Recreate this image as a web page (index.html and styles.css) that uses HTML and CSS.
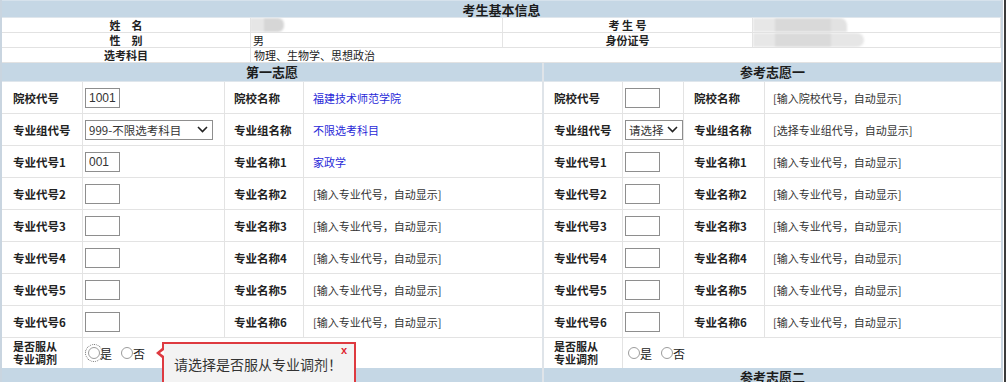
FILE: index.html
```html
<!DOCTYPE html>
<html lang="zh-CN">
<head>
<meta charset="utf-8">
<title>考生基本信息</title>
<link rel="stylesheet" href="styles.css">
</head>
<body>
<div class="window">
  <div class="page">
    <div class="band">考生基本信息</div>
    <div class="info">
      <div class="il">姓　名</div>
      <div class="iv"><span class="mosaic m-name"><i></i><i></i></span></div>
      <div class="il">考 生 号</div>
      <div class="iv"><span class="mosaic m-id1"><i></i><i></i><i></i></span></div>
      <div class="il">性　别</div>
      <div class="iv">男</div>
      <div class="il">身份证号</div>
      <div class="iv"><span class="mosaic m-id2"><i></i><i></i><i></i></span></div>
      <div class="il">选考科目</div>
      <div class="iv span3">物理、生物学、思想政治</div>
    </div>

    <div class="panels">
      <section class="panel p-left">
        <div class="band">第一志愿</div>

        <div class="c lab">院校代号</div>
        <div class="c inp"><input class="txt" type="text" value="1001"></div>
        <div class="c lab2">院校名称</div>
        <div class="c val blue">福建技术师范学院</div>

        <div class="c lab">专业组代号</div>
        <div class="c inp"><span class="sel sel-wide"><span class="sel-text">999-不限选考科目</span><svg class="chev" width="11" height="7" viewBox="0 0 11 7"><path d="M1 1 L5.5 5.5 L10 1" fill="none" stroke="#222" stroke-width="1.6"/></svg></span></div>
        <div class="c lab2">专业组名称</div>
        <div class="c val blue">不限选考科目</div>

        <div class="c lab">专业代号1</div>
        <div class="c inp"><input class="txt" type="text" value="001"></div>
        <div class="c lab2">专业名称1</div>
        <div class="c val blue">家政学</div>

        <div class="c lab">专业代号2</div>
        <div class="c inp"><input class="txt" type="text"></div>
        <div class="c lab2">专业名称2</div>
        <div class="c val">[输入专业代号，自动显示]</div>

        <div class="c lab">专业代号3</div>
        <div class="c inp"><input class="txt" type="text"></div>
        <div class="c lab2">专业名称3</div>
        <div class="c val">[输入专业代号，自动显示]</div>

        <div class="c lab">专业代号4</div>
        <div class="c inp"><input class="txt" type="text"></div>
        <div class="c lab2">专业名称4</div>
        <div class="c val">[输入专业代号，自动显示]</div>

        <div class="c lab">专业代号5</div>
        <div class="c inp"><input class="txt" type="text"></div>
        <div class="c lab2">专业名称5</div>
        <div class="c val">[输入专业代号，自动显示]</div>

        <div class="c lab">专业代号6</div>
        <div class="c inp"><input class="txt" type="text"></div>
        <div class="c lab2">专业名称6</div>
        <div class="c val">[输入专业代号，自动显示]</div>

        <div class="c lab lab-2l">是否服从<br>专业调剂</div>
        <div class="c radios span3">
          <label class="rad"><span class="dot focus"></span>是</label>
          <label class="rad"><span class="dot"></span>否</label>
        </div>
      </section>

      <section class="panel p-right">
        <div class="band">参考志愿一</div>

        <div class="c lab">院校代号</div>
        <div class="c inp"><input class="txt" type="text"></div>
        <div class="c lab2">院校名称</div>
        <div class="c val">[输入院校代号，自动显示]</div>

        <div class="c lab">专业组代号</div>
        <div class="c inp"><span class="sel sel-small"><span class="sel-text">请选择</span><svg class="chev" width="11" height="7" viewBox="0 0 11 7"><path d="M1 1 L5.5 5.5 L10 1" fill="none" stroke="#222" stroke-width="1.6"/></svg></span></div>
        <div class="c lab2">专业组名称</div>
        <div class="c val">[选择专业组代号，自动显示]</div>

        <div class="c lab">专业代号1</div>
        <div class="c inp"><input class="txt" type="text"></div>
        <div class="c lab2">专业名称1</div>
        <div class="c val">[输入专业代号，自动显示]</div>

        <div class="c lab">专业代号2</div>
        <div class="c inp"><input class="txt" type="text"></div>
        <div class="c lab2">专业名称2</div>
        <div class="c val">[输入专业代号，自动显示]</div>

        <div class="c lab">专业代号3</div>
        <div class="c inp"><input class="txt" type="text"></div>
        <div class="c lab2">专业名称3</div>
        <div class="c val">[输入专业代号，自动显示]</div>

        <div class="c lab">专业代号4</div>
        <div class="c inp"><input class="txt" type="text"></div>
        <div class="c lab2">专业名称4</div>
        <div class="c val">[输入专业代号，自动显示]</div>

        <div class="c lab">专业代号5</div>
        <div class="c inp"><input class="txt" type="text"></div>
        <div class="c lab2">专业名称5</div>
        <div class="c val">[输入专业代号，自动显示]</div>

        <div class="c lab">专业代号6</div>
        <div class="c inp"><input class="txt" type="text"></div>
        <div class="c lab2">专业名称6</div>
        <div class="c val">[输入专业代号，自动显示]</div>

        <div class="c lab lab-2l">是否服从<br>专业调剂</div>
        <div class="c radios span3">
          <label class="rad"><span class="dot"></span>是</label>
          <label class="rad"><span class="dot"></span>否</label>
        </div>
      </section>
    </div>

    <div class="panels">
      <section class="panel p-left"><div class="band">第二志愿</div></section>
      <section class="panel p-right"><div class="band">参考志愿二</div></section>
    </div>
  </div>

  <div class="tip">
    <span class="tip-text">请选择是否服从专业调剂！</span>
    <span class="tip-close">x</span>
  </div>
</div>
</body>
</html>
```

FILE: styles.css
```css
* { box-sizing: border-box; }

html, body {
  margin: 0;
  padding: 0;
  background: #fff;
}

body {
  width: 1006px;
  height: 382px;
  overflow: hidden;
  font-family: "Noto Sans CJK SC", "Noto Sans", sans-serif;
  font-size: 11px;
  color: #222;
}

.window {
  position: relative;
  width: 1006px;
  height: 382px;
  padding-right: 1px;
  border-right: 2px solid #3b3b3b;
}

.page {
  width: 1003px;
  border-left: 2px solid #c9d5e0;
  border-right: 2px solid #c9d5e0;
}

.band {
  grid-column: 1 / -1;
  height: 19px;
  background: #c5d7e5;
  border-bottom: 1px solid #dfe6ec;
  font-size: 13px;
  font-weight: bold;
  line-height: 18px;
  text-align: center;
  color: #1c1c1c;
}

.page > .band {
  height: 18px;
  line-height: 18px;
  border-top: 1px solid #d6e2ec;
}

/* basic info */
.info {
  display: grid;
  grid-template-columns: 248px 253px 249px 249px;
  grid-auto-rows: 15px;
}

.il, .iv {
  border-bottom: 1px solid #e2e2e2;
  line-height: 14px;
  white-space: nowrap;
  overflow: hidden;
}

.il {
  font-weight: bold;
  text-align: center;
}

.iv {
  padding-left: 2px;
  border-left: 1px solid #e4e4e4;
  border-right: 1px solid #e4e4e4;
}

.iv.span3 {
  grid-column: span 3;
  border-right: 0;
  padding-left: 3px;
}

.mosaic {
  display: inline-flex;
  height: 14px;
  margin-left: -3px;
  filter: blur(1px);
}

.mosaic i {
  display: block;
  height: 100%;
}

.m-name i:nth-child(1) { width: 14px; background: #e6e6e6; }
.m-name i:nth-child(2) { width: 20px; background: #d6d6d6; border-radius: 0 6px 6px 0; }

.m-id1 { margin-left: -2px; }
.m-id1 i:nth-child(1) { width: 22px; background: #e7e7e7; }
.m-id1 i:nth-child(2) { width: 56px; background: #d9d9d9; }
.m-id1 i:nth-child(3) { width: 16px; background: #e2e2e2; border-radius: 0 7px 0 0; }

.m-id2 { margin-left: -2px; }
.m-id2 i:nth-child(1) { width: 22px; background: #e7e7e7; }
.m-id2 i:nth-child(2) { width: 56px; background: #dadada; }
.m-id2 i:nth-child(3) { width: 33px; background: #e6e6e6; border-radius: 0 8px 8px 0; }

/* panels */
.panels {
  display: grid;
  grid-template-columns: 540px 457px;
  column-gap: 2px;
  background: #dfe4e9;
}

.panel {
  display: grid;
  grid-template-rows: 19px repeat(8, 32px) 30px;
  background: #fff;
}

.p-left { grid-template-columns: 81px 142px 79px 238px; }
.p-right { grid-template-columns: 79px 61px 81px 236px; }

.panels + .panels .panel {
  grid-template-rows: 19px;
}

.c {
  display: flex;
  align-items: center;
  border-bottom: 1px solid #e3e3e3;
  border-right: 1px solid #e3e3e3;
  white-space: nowrap;
  overflow: hidden;
}

.c.val, .c.span3 { border-right: 0; }
.c.span3 { grid-column: span 3; }

.lab {
  padding-left: 11px;
  font-weight: bold;
  font-size: 11.5px;
  color: #222;
}

.p-right .lab { padding-left: 10px; }

.lab-2l {
  font-size: 11px;
  line-height: 13px;
  border-bottom: 0;
}

.radios { border-bottom: 0; }

.lab2 {
  padding-left: 9px;
  font-weight: bold;
  font-size: 11.5px;
}

.p-right .lab2 { padding-left: 10px; }

.val {
  padding-left: 9px;
  color: #333;
}

.p-right .val { padding-left: 8px; }

.val.blue { color: #2a2ad8; }

.inp { padding-left: 2px; }

.txt {
  width: 35px;
  height: 20px;
  margin: 0;
  padding: 0 3px;
  border: 1px solid #8e8e8e;
  border-radius: 0;
  background: #fff;
  font-family: "Liberation Sans", Arial, sans-serif;
  font-size: 12px;
  color: #333;
  outline: none;
}

.sel {
  position: relative;
  display: flex;
  align-items: center;
  height: 20px;
  padding-left: 3px;
  border: 1px solid #8e8e8e;
  background: #fff;
  font-size: 11.5px;
  color: #333;
}

.sel-wide { width: 128px; }
.sel-small { width: 58px; }

.sel-text { flex: 1; }

.chev {
  margin-right: 4px;
  flex: none;
}

.radios { padding-left: 5px; }

.rad {
  display: inline-flex;
  align-items: center;
  font-size: 12px;
  color: #222;
  margin-right: 9px;
}

.dot {
  position: relative;
  display: block;
  width: 12px;
  height: 12px;
  border: 1px solid #9c9c9c;
  border-radius: 50%;
  background: #fff;
}

.dot.focus {
  outline: 1px dotted #666;
  outline-offset: 2px;
}

/* validation tooltip */
.tip {
  position: absolute;
  left: 162px;
  top: 342px;
  width: 194px;
  height: 46px;
  border: 2px solid #de3a40;
  background: #f3f3f3;
  padding: 10px 0 0 10px;
}

.tip::before,
.tip::after {
  content: "";
  position: absolute;
  top: 4px;
  width: 0;
  height: 0;
  border-style: solid;
}

.tip::before {
  left: -8px;
  border-width: 5px 6px 5px 0;
  border-color: transparent #de3a40 transparent transparent;
}

.tip::after {
  left: -4px;
  top: 6px;
  border-width: 3px 4px 3px 0;
  border-color: transparent #fff transparent transparent;
}

.tip-text {
  font-size: 14px;
  line-height: 20px;
  color: #333;
}

.tip-close {
  position: absolute;
  top: 1px;
  right: 7px;
  font-family: "Liberation Sans", Arial, sans-serif;
  font-size: 11px;
  font-weight: bold;
  line-height: 11px;
  color: #e0262e;
}
```
